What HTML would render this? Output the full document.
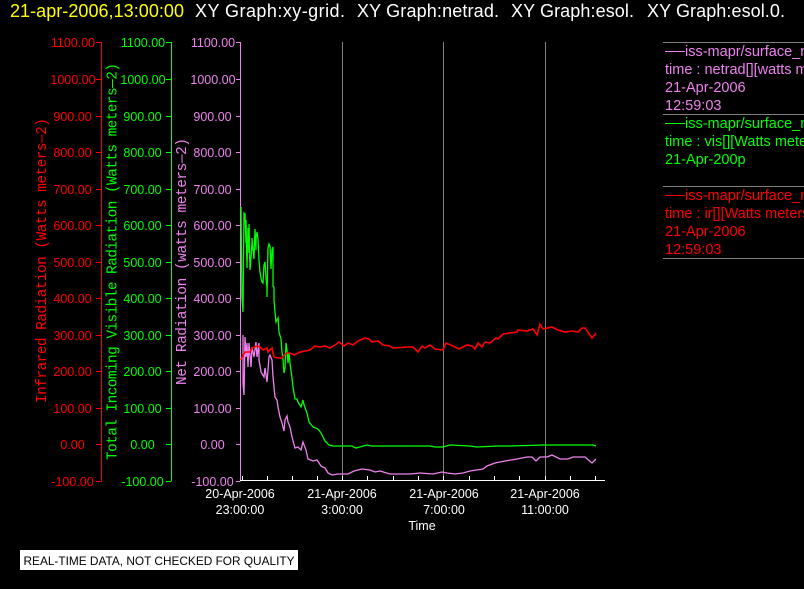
<!DOCTYPE html>
<html>
<head>
<meta charset="utf-8">
<style>
html,body{margin:0;padding:0;background:#000;width:804px;height:589px;overflow:hidden}
svg{display:block}
text{font-family:"Liberation Sans",sans-serif}
.m{font-family:"Liberation Mono",monospace;font-size:14.5px}
.x{font-size:12.5px;fill:#fff;text-anchor:middle}
</style>
</head>
<body>
<svg width="804" height="589" viewBox="0 0 804 589" xmlns="http://www.w3.org/2000/svg">
<rect width="804" height="589" fill="#000"/>

<text x="10" y="17" font-size="18" fill="#ffff00" textLength="174" lengthAdjust="spacing">21-apr-2006,13:00:00</text>
<text x="195" y="17" font-size="18" fill="#fff" textLength="150" lengthAdjust="spacing">XY Graph:xy-grid.</text>
<text x="357" y="17" font-size="18" fill="#fff" textLength="142" lengthAdjust="spacing">XY Graph:netrad.</text>
<text x="511" y="17" font-size="18" fill="#fff" textLength="123" lengthAdjust="spacing">XY Graph:esol.</text>
<text x="647" y="17" font-size="18" fill="#fff" textLength="138" lengthAdjust="spacing">XY Graph:esol.0.</text>

<g stroke="#808080" stroke-width="1" shape-rendering="crispEdges">
<path d="M342.5 42V481M443.5 42V481M545.5 42V481"/>
<path d="M663 42.5H804M663 114.5H804M663 186.5H804M663 258.5H804"/>
</g>

<g shape-rendering="crispEdges" fill="none" stroke-width="1">
<path stroke="#ff0000" d="M101.5 42V481.5M96 42.5H101M96 79.5H101M96 116.5H101M96 152.5H101M96 189.5H101M96 225.5H101M96 262.5H101M96 298.5H101M96 335.5H101M96 371.5H101M96 408.5H101M96 444.5H101M96 481.5H101"/>
<path stroke="#00ff00" d="M171.5 42V481.5M166 42.5H171M166 79.5H171M166 116.5H171M166 152.5H171M166 189.5H171M166 225.5H171M166 262.5H171M166 298.5H171M166 335.5H171M166 371.5H171M166 408.5H171M166 444.5H171M166 481.5H171"/>
<path stroke="#ee82ee" d="M240.5 42V481.5M236 42.5H240M236 79.5H240M236 116.5H240M236 152.5H240M236 189.5H240M236 225.5H240M236 262.5H240M236 298.5H240M236 335.5H240M236 371.5H240M236 408.5H240M236 444.5H240M236 481.5H240"/>
<path stroke="#ffffff" d="M240 480.5H605M242.5 476V480M267.5 476V480M292.5 476V480M317.5 476V480M342.5 476V480M367.5 476V480M393.5 476V480M418.5 476V480M443.5 476V480M469.5 476V480M494.5 476V480M519.5 476V480M545.5 476V480M570.5 476V480M595.5 476V480"/>
</g>

<g fill="#ff0000" font-size="12.5" text-anchor="middle">
<text x="73" y="47">1100.00</text><text x="73" y="84">1000.00</text><text x="72.500" y="121">900.00</text><text x="72.500" y="157">800.00</text><text x="72.500" y="194">700.00</text><text x="72.500" y="230">600.00</text><text x="72.500" y="267">500.00</text><text x="72.500" y="303">400.00</text><text x="72.500" y="340">300.00</text><text x="72.500" y="376">200.00</text><text x="72.500" y="413">100.00</text><text x="72.500" y="449">0.00</text><text x="72.500" y="486">-100.00</text>
</g>
<g fill="#00ff00" font-size="12.5" text-anchor="middle">
<text x="143" y="47">1100.00</text><text x="143" y="84">1000.00</text><text x="142.500" y="121">900.00</text><text x="142.500" y="157">800.00</text><text x="142.500" y="194">700.00</text><text x="142.500" y="230">600.00</text><text x="142.500" y="267">500.00</text><text x="142.500" y="303">400.00</text><text x="142.500" y="340">300.00</text><text x="142.500" y="376">200.00</text><text x="142.500" y="413">100.00</text><text x="142.500" y="449">0.00</text><text x="142.500" y="486">-100.00</text>
</g>
<g fill="#ee82ee" font-size="12.5" text-anchor="middle">
<text x="213" y="47">1100.00</text><text x="213" y="84">1000.00</text><text x="212.500" y="121">900.00</text><text x="212.500" y="157">800.00</text><text x="212.500" y="194">700.00</text><text x="212.500" y="230">600.00</text><text x="212.500" y="267">500.00</text><text x="212.500" y="303">400.00</text><text x="212.500" y="340">300.00</text><text x="212.500" y="376">200.00</text><text x="212.500" y="413">100.00</text><text x="212.500" y="449">0.00</text><text x="212.500" y="486">-100.00</text>
</g>

<text class="m" fill="#ff0000" transform="translate(46 403) rotate(-90)" textLength="285" lengthAdjust="spacing">Infrared Radiation (Watts meters—2)</text>
<text class="m" fill="#00ff00" transform="translate(116.500 460) rotate(-90)" textLength="397" lengthAdjust="spacing">Total Incoming Visible Radiation (Watts meters—2)</text>
<text class="m" fill="#ee82ee" transform="translate(186 385) rotate(-90)" textLength="247" lengthAdjust="spacing">Net Radiation (watts meters—2)</text>

<text class="x" x="240" y="498">20-Apr-2006</text><text class="x" x="240" y="514">23:00:00</text>
<text class="x" x="342" y="498">21-Apr-2006</text><text class="x" x="342" y="514">3:00:00</text>
<text class="x" x="444" y="498">21-Apr-2006</text><text class="x" x="444" y="514">7:00:00</text>
<text class="x" x="545" y="498">21-Apr-2006</text><text class="x" x="545" y="514">11:00:00</text>
<text class="x" x="422" y="530">Time</text>

<polyline fill="none" stroke="#ee82ee" stroke-width="1.3" points="243,335 243,383 244,395 245,337 246,357 247,343 248,367 249,343 251,367 252,347 254,357 256,342 257,357 259,343 259,360 261,372 264,377 265,368 267,382 269,357 270,355 272,360 273,377 275,397 277,400 278,407 280,417 282,423 284,431 285,420 287,416 288,422 290,427 292,437 295,448 298,447 301,450 303,442 306,450 308,459 313,461 317,460 321,466 325,468 328,473 332,475 338,474 348,474 354,471 362,469 370,470 375,472 380,471 390,474 410,474 420,473 433,474 442,472 447,473 455,474 463,473 470,471 483,469 487,466 495,463 505,461 517,459 527,457 532,457 536,461 540,457 547,457 552,455 560,459 568,459 573,457 585,457 592,463 596,459"/>

<polyline fill="none" stroke="#00ff00" stroke-width="1.3" points="241,207 242,297 243,312 244,213 245,214 246,243 246,220 247,268 248,228 249,253 249,224 250,270 251,258 252,243 252,238 253,250 254,259 255,229 256,250 256,238 257,232 258,239 259,260 260,272 261,278 262,282 263,283 264,265 265,262 266,278 267,288 267,297 268,248 269,244 270,246 271,269 272,250 273,247 273,286 274,287 274,300 275,312 276,322 278,318 279,332 281,339 282,352 283,360 284,373 285,368 286,343 287,350 288,363 289,353 290,363 292,378 293,387 295,399 297,399 298,402 301,407 303,400 304,405 307,413 309,422 313,427 318,429 321,433 325,441 329,445 333,446 352,446 356,448 367,445 372,446 410,446 430,446 435,447 443,447 450,445 470,446 477,447 497,446 510,446 543,445 593,445 596,446"/>

<polyline fill="none" stroke="#ff0000" stroke-width="1.6" points="241,360 243,355 245,352 250,352 252,348 257,346 260,347 263,350 267,348 268,352 272,348 274,357 278,358 282,358 284,355 287,353 290,353 294,355 300,352 305,351 310,350 315,346 320,347 325,346 330,348 335,345 339,342 344,346 348,343 353,345 358,341 365,338 369,339 372,342 378,341 383,345 390,346 393,348 407,347 413,347 418,352 422,346 425,348 430,345 435,349 443,350 446,343 453,346 459,349 467,345 472,346 475,349 478,343 482,347 485,342 490,343 496,338 498,339 503,334 510,333 517,332 518,330 527,331 533,329 537,335 540,324 543,329 552,327 558,330 565,332 572,331 578,332 582,328 585,328 592,338 596,333"/>

<g font-size="14.5">
<g fill="#ee82ee">
<path d="M665 51.500H685" stroke="#ee82ee" stroke-width="1" shape-rendering="crispEdges"/>
<text x="685" y="56">iss-mapr/surface_r</text>
<text x="665" y="74">time : netrad[][watts m</text>
<text x="665" y="92">21-Apr-2006</text>
<text x="665" y="110">12:59:03</text>
</g>
<g fill="#00ff00">
<path d="M665 123.500H685" stroke="#00ff00" stroke-width="1" shape-rendering="crispEdges"/>
<text x="685" y="128">iss-mapr/surface_r</text>
<text x="665" y="146">time : vis[][Watts mete</text>
<text x="665" y="164">21-Apr-200p</text>
</g>
<g fill="#ff0000">
<path d="M665 195.500H685" stroke="#ff0000" stroke-width="1" shape-rendering="crispEdges"/>
<text x="685" y="200">iss-mapr/surface_r</text>
<text x="665" y="218">time : ir[][Watts meters</text>
<text x="665" y="236">21-Apr-2006</text>
<text x="665" y="254">12:59:03</text>
</g>
</g>

<rect x="20" y="550" width="278" height="20" fill="#fff"/>
<text x="23.500" y="565" font-size="12" fill="#000" textLength="271" lengthAdjust="spacingAndGlyphs">REAL-TIME DATA, NOT CHECKED FOR QUALITY</text>
</svg>
</body>
</html>
